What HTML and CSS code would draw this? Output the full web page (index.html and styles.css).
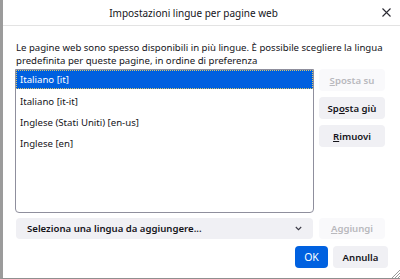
FILE: index.html
```html
<!DOCTYPE html>
<html>
<head>
    <title>Impostazioni lingue per pagine web</title>
    <link rel="stylesheet" href="styles.css">
</head>
<body>
    <div class="window">
        <div class="titlebar">
            <span class="title">Impostazioni lingue per pagine web</span>
            <span class="close">
                <svg width="9" height="9" viewBox="0 0 9 9"><path d="M0.5 0.5 L8.5 8.5 M8.5 0.5 L0.5 8.5" stroke="#2b2a33" stroke-width="1.1"/></svg>
            </span>
        </div>
        <div class="content">
            <p class="intro">Le pagine web sono spesso disponibili in più lingue. È possibile scegliere la lingua predefinita per queste pagine, in ordine di preferenza</p>
            <div class="main-row">
                <div class="lang-list">
                    <div class="lang-item selected">Italiano [it]</div>
                    <div class="lang-item">Italiano [it-it]</div>
                    <div class="lang-item">Inglese (Stati Uniti) [en-us]</div>
                    <div class="lang-item">Inglese [en]</div>
                </div>
                <div class="side-buttons">
                    <button class="btn" disabled><u>S</u>posta su</button>
                    <button class="btn">Sp<u>o</u>sta giù</button>
                    <button class="btn"><u>R</u>imuovi</button>
                </div>
            </div>
            <div class="add-row">
                <div class="select">
                    <span>Seleziona una lingua da aggiungere...</span>
                    <svg width="7" height="5" viewBox="0 0 7 5"><path d="M0.8 1 L3.5 3.7 L6.2 1" fill="none" stroke="#3a3944" stroke-width="1.1"/></svg>
                </div>
                <button class="btn" disabled><u>A</u>ggiungi</button>
            </div>
            <div class="footer">
                <button class="btn primary">OK</button>
                <button class="btn cancel">Annulla</button>
            </div>
        </div>
        <svg class="grip" width="9" height="9" viewBox="0 0 9 9"><path d="M9 1 L1 9 M9 4 L4 9 M9 7 L7 9" stroke="#9a9a9a" stroke-width="1"/></svg>
    </div>
</body>
</html>
```

FILE: styles.css
```css
body {
    margin: 0;
    background-color: #ffffff;
    font-family: "Noto Sans", "Open Sans", sans-serif;
    color: #15141a;
}

.window {
    position: relative;
    height: 278px;
    border-left: 3px solid #9b9b9b;
    border-bottom: 1px solid #8f8f8f;
    background-color: #ffffff;
}

.titlebar {
    display: flex;
    align-items: center;
    justify-content: center;
    height: 25px;
    border-bottom: 1px solid #e3e3e3;
    padding-right: 16px;
}

.title {
    font-size: 10px;
}

.close {
    position: absolute;
    top: 8px;
    right: 9px;
    display: flex;
}

.content {
    padding: 16px 15px 0 13px;
}

.intro {
    margin: 0;
    font-size: 9.6px;
    line-height: 12.5px;
}

.main-row {
    display: flex;
    gap: 5px;
    margin-top: 2px;
    margin-left: -1px;
}

.lang-list {
    width: 297px;
    height: 142px;
    border: 1px solid #8f8f9d;
    border-radius: 0 0 4px 4px;
    font-size: 9.6px;
}

.lang-item {
    height: 21px;
    line-height: 21px;
    padding-left: 4px;
}

.lang-item.selected {
    height: 19px;
    line-height: 19px;
    margin-bottom: 2px;
    background-color: #0060df;
    color: #ffffff;
    outline: 1px dotted #d8c46a;
    outline-offset: -1px;
}

.side-buttons {
    display: flex;
    flex-direction: column;
    gap: 6px;
}

.btn {
    width: 66px;
    height: 22px;
    padding: 0;
    border: none;
    border-radius: 4px;
    background-color: #f0f0f4;
    color: #15141a;
    font-family: "Noto Sans", "Open Sans", sans-serif;
    font-size: 9.6px;
    font-weight: 600;
}

.btn:disabled {
    background-color: #f9f9fb;
    color: #b8b8bd;
}

.add-row {
    display: flex;
    gap: 6px;
    margin-top: 5px;
}

.select {
    display: flex;
    align-items: center;
    justify-content: space-between;
    width: 297px;
    height: 21px;
    padding: 0 11px 0 11px;
    box-sizing: border-box;
    background-color: #f0f0f4;
    border-radius: 4px;
    font-size: 9.6px;
    font-weight: 600;
}

.add-row .btn {
    height: 21px;
}

.footer {
    display: flex;
    justify-content: flex-end;
    gap: 5px;
    margin-top: 7px;
    margin-right: -3px;
}

.btn.primary {
    width: 33px;
    background-color: #0061e0;
    color: #ffffff;
    font-weight: 400;
    font-size: 10.5px;
}

.btn.cancel {
    width: 55px;
}

.grip {
    position: absolute;
    right: 0;
    bottom: 0;
}
```
